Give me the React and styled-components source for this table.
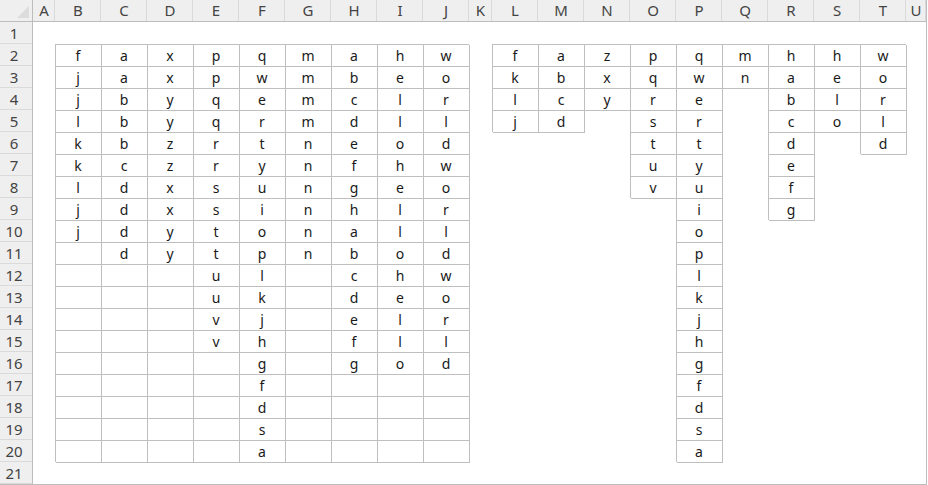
import React from 'react';
import styled, {createGlobalStyle} from 'styled-components';

const GlobalStyle = createGlobalStyle`
    html, body {
        margin: 0;
        padding: 0;
        background: #ffffff;
    }
    body {
        font-family: "Noto Sans", "Open Sans", Arial, sans-serif;
    }
`;

const letters = 'ABCDEFGHIJKLMNOPQRSTU'.split('');

// column letter -> values from row 2 down
const leftTable = {
    B: 'fjjlkkljj',
    C: 'aabbbcdddd',
    D: 'xxyyzzxxyy',
    E: 'ppqqrrssttuuvv',
    F: 'qwertyuioplkjhgfdsa',
    G: 'mmmmnnnnnn',
    H: 'abcdefghabcdefg',
    I: 'hellohellohello',
    J: 'worldworldworld'
};

const rightTable = {
    L: 'fklj',
    M: 'abcd',
    N: 'zxy',
    O: 'pqrstuv',
    P: 'qwertyuioplkjhgfdsa',
    Q: 'mn',
    R: 'habcdefg',
    S: 'helo',
    T: 'world'
};

const ROWS = 21;

function buildRow(r) {
    return letters.map((col) => {
        let text = '';
        let bordered = false;
        if (leftTable[col] && r >= 2) {
            text = leftTable[col][r - 2] || '';
            bordered = r <= 20; // whole B2:J20 block is framed
        }
        if (rightTable[col] && r >= 2) {
            text = rightTable[col][r - 2] || '';
            bordered = r - 2 < rightTable[col].length;
        }
        return {key: col + r, text, bordered};
    });
}

export default function App() {
    return (
        <>
            <GlobalStyle/>
            <Sheet>
                <Corner><CornerMark/></Corner>
                {letters.map((l) => <ColHead key={l}>{l}</ColHead>)}
                {Array.from({length: ROWS}, (_, i) => i + 1).map((row) => (
                    <React.Fragment key={row}>
                        <RowHead>{row}</RowHead>
                        {buildRow(row).map((c) => (
                            <Cell key={c.key} $bordered={c.bordered}>{c.text}</Cell>
                        ))}
                    </React.Fragment>
                ))}
            </Sheet>
        </>
    );
}

const
    Sheet = styled.div`
        display: grid;
        grid-template-columns: 33px 22px repeat(9, 46px) 23px repeat(9, 46px) 20px;
        grid-template-rows: repeat(22, 22px);
        width: 926px;
        border-right: 1px solid #bdbdbd;
        border-bottom: 1px solid #bdbdbd;
        background: #ffffff;
    `,
    Corner = styled.div`
        position: relative;
        background: #efefef;
        border-right: 1px solid #bdbdbd;
        border-bottom: 1px solid #bdbdbd;
        box-sizing: border-box;
    `,
    CornerMark = styled.div`
        position: absolute;
        right: 3px;
        bottom: 3px;
        width: 0;
        height: 0;
        border-left: 12px solid transparent;
        border-bottom: 12px solid #dcdcdc;
    `,
    ColHead = styled.div`
        display: flex;
        align-items: center;
        justify-content: center;
        background: #efefef;
        color: #444444;
        font-size: 15px;
        box-sizing: border-box;
        border-bottom: 1px solid #bdbdbd;
        box-shadow: inset -1px 0 0 #dadada;
        padding-bottom: 1px;
    `,
    RowHead = styled.div`
        display: flex;
        align-items: center;
        justify-content: center;
        background: #efefef;
        color: #444444;
        font-size: 15px;
        box-sizing: border-box;
        border-right: 1px solid #bdbdbd;
        box-shadow: inset 0 -1px 0 #dadada;
        padding-right: 4px;
    `,
    Cell = styled.div`
        display: flex;
        align-items: center;
        justify-content: center;
        font-size: 14px;
        color: #1a1a1a;
        box-shadow: ${(p) => p.$bordered
            ? 'inset 1px 1px 0 0 #bfbfbf, 1px 1px 0 0 #bfbfbf'
            : 'none'};
    `;
